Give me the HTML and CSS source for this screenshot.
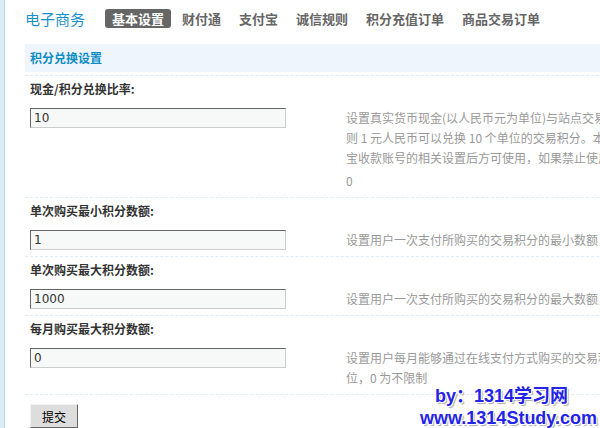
FILE: index.html
```html
<!DOCTYPE html>
<html lang="zh-CN">
<head>
    <meta charset="UTF-8">
    <title>电子商务 - 基本设置</title>
    <link rel="stylesheet" href="styles.css">
</head>
<body>
    <div class="side-strip"></div>
    <div class="main">
        <div class="nav">
            <h3 class="nav-title">电子商务</h3>
            <ul class="tabs">
                <li class="tab current">基本设置</li>
                <li class="tab">财付通</li>
                <li class="tab">支付宝</li>
                <li class="tab">诚信规则</li>
                <li class="tab">积分充值订单</li>
                <li class="tab">商品交易订单</li>
            </ul>
        </div>

        <form class="settings">
            <div class="section-head">积分兑换设置</div>

            <div class="row">
                <div class="row-label">现金/积分兑换比率:</div>
                <div class="row-body">
                    <div class="field"><input class="text-input" type="text" value="10"></div>
                    <div class="tips">
                        <div class="tip-line">设置真实货币现金(以人民币元为单位)与站点交易积分间的兑换比率，例如设置为 10，</div>
                        <div class="tip-line">则 1 元人民币可以兑换 10 个单位的交易积分。本功能需开启交易积分，并完成支付</div>
                        <div class="tip-line">宝收款账号的相关设置后方可使用，如果禁止使用现金购买交易积分，请设置为</div>
                        <div class="tip-line tip-last">0</div>
                    </div>
                </div>
            </div>

            <div class="row">
                <div class="row-label">单次购买最小积分数额:</div>
                <div class="row-body">
                    <div class="field"><input class="text-input" type="text" value="1"></div>
                    <div class="tips">
                        <div class="tip-line">设置用户一次支付所购买的交易积分的最小数额，单位为交易积分单位，0 为不限制</div>
                    </div>
                </div>
            </div>

            <div class="row">
                <div class="row-label">单次购买最大积分数额:</div>
                <div class="row-body">
                    <div class="field"><input class="text-input" type="text" value="1000"></div>
                    <div class="tips">
                        <div class="tip-line">设置用户一次支付所购买的交易积分的最大数额，单位为交易积分单位，0 为不限制</div>
                    </div>
                </div>
            </div>

            <div class="row">
                <div class="row-label">每月购买最大积分数额:</div>
                <div class="row-body">
                    <div class="field"><input class="text-input" type="text" value="0"></div>
                    <div class="tips">
                        <div class="tip-line">设置用户每月能够通过在线支付方式购买的交易积分的最大数额，单位为交易积分单</div>
                        <div class="tip-line">位，0 为不限制</div>
                    </div>
                </div>
            </div>

            <div class="row row-submit">
                <button class="btn" type="button">提交</button>
            </div>
        </form>
    </div>

    <div class="watermark">
        <div class="wm-by">by：1314学习网</div>
        <div class="wm-url">www.1314Study.com</div>
    </div>
</body>
</html>
```

FILE: styles.css
```css
html {
    overflow: hidden;
}
body {
    margin: 0;
    padding: 0;
    height: 428px;
    display: flex;
    background: #FFFFFF;
    font: 12px Verdana, "DejaVu Sans", "Noto Sans CJK SC", sans-serif;
    color: #333333;
}
.side-strip {
    flex: 0 0 4px;
    background: #DEECF7;
    border-right: 1px solid #B9D4EA;
}
.main {
    flex: 0 0 900px;
    padding-left: 20px;
}

/* top navigation */
.nav {
    display: flex;
    align-items: center;
    height: 36px;
}
.nav-title {
    margin: 0 20px 0 0;
    font-size: 15px;
    font-weight: normal;
    color: #1A90C9;
    font-family: "Noto Sans CJK SC", sans-serif;
    line-height: 18px;
    padding-top: 1px;
}
.tabs {
    display: flex;
    margin: 0;
    padding: 0;
    list-style: none;
}
.tab {
    padding: 0 7px;
    margin-right: 4px;
    height: 19px;
    line-height: 19px;
    font-size: 13px;
    font-weight: bold;
    color: #666666;
    font-family: "Noto Sans CJK SC", sans-serif;
    border-radius: 3px;
}
.tab.current {
    background: #666666;
    color: #FFFFFF;
}

/* settings table */
.settings {
    margin-top: 8px;
}
.section-head {
    height: 28px;
    line-height: 28px;
    padding-left: 5px;
    background: #EEF5FD;
    color: #0B8CC6;
    font-weight: bold;
    font-family: "Noto Sans CJK SC", sans-serif;
    margin-bottom: 3px;
}
.row {
    border-top: 1px dashed #DCEDF7;
    padding: 0 5px;
}
.row-label {
    height: 26px;
    line-height: 26px;
    font-weight: bold;
    color: #333333;
    font-family: "Noto Sans CJK SC", sans-serif;
}
.row-body {
    display: flex;
    align-items: flex-start;
    padding: 6px 0;
}
.field {
    flex: 0 0 316px;
}
.text-input {
    box-sizing: border-box;
    width: 256px;
    height: 20px;
    margin: 0;
    padding: 0 3px;
    background: #F7F9F8;
    border: 1px solid #CCCCCC;
    border-top-color: #666666;
    border-left-color: #666666;
    font: 12px Verdana, "DejaVu Sans", sans-serif;
    color: #333333;
    outline: none;
}
.tips {
    color: #999999;
    line-height: 20px;
    font-family: "Noto Sans CJK SC", sans-serif;
}
.tip-line {
    white-space: nowrap;
}
.tip-last {
    margin-top: 3px;
}
.row-submit {
    padding-top: 9px;
}
.btn {
    width: 48px;
    height: 24px;
    padding: 0;
    background: #DDDDDD;
    border: 1px solid #666666;
    border-top-color: #F2F2F2;
    border-left-color: #F2F2F2;
    font: 12px "Noto Sans CJK SC", sans-serif;
    color: #000000;
}

/* site watermark over the corner */
.watermark {
    position: absolute;
    left: 420px;
    top: 385px;
    font: bold 18px "Liberation Sans", "Noto Sans CJK SC", sans-serif;
    color: #2424E8;
    line-height: 22px;
    text-shadow: 1px 1px 0 #FFFFFF, -1px -1px 0 #FFFFFF, 1px -1px 0 #FFFFFF, -1px 1px 0 #FFFFFF, 2px 2px 1px #AAAAAA;
}
.wm-by {
    padding-left: 15px;
}
```
